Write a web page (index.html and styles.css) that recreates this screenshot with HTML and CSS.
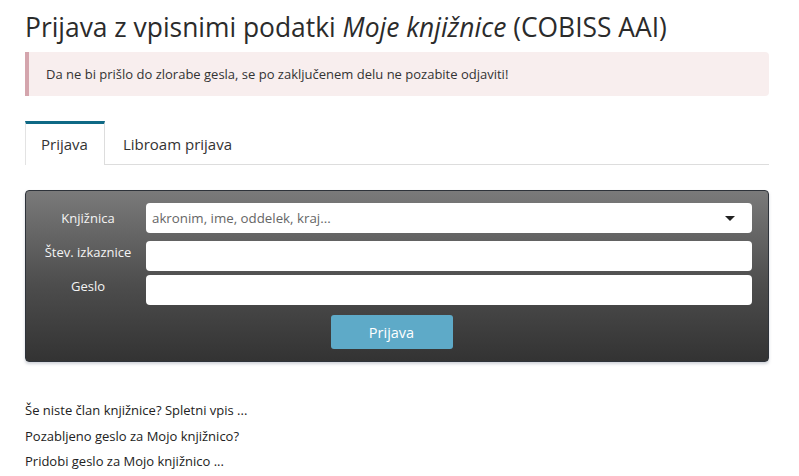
FILE: index.html
```html
<!DOCTYPE html>
<html lang="sl">
<head>
<meta charset="utf-8">
<title>Prijava</title>
<link rel="stylesheet" href="styles.css">
</head>
<body>
<div class="page">
  <h1 class="title">Prijava z vpisnimi podatki <em>Moje knjižnice</em> (COBISS AAI)</h1>
  <div class="alert">Da ne bi prišlo do zlorabe gesla, se po zaključenem delu ne pozabite odjaviti!</div>
  <ul class="tabs">
    <li class="tab active">Prijava</li>
    <li class="tab">Libroam prijava</li>
  </ul>
  <form class="panel">
    <div class="row row-first">
      <label class="label">Knjižnica</label>
      <div class="select">
        <span class="placeholder">akronim, ime, oddelek, kraj...</span>
        <span class="caret"></span>
      </div>
    </div>
    <div class="row row-second">
      <label class="label label-raised">Štev. izkaznice</label>
      <div class="input"></div>
    </div>
    <div class="row row-third">
      <label class="label label-raised">Geslo</label>
      <div class="input"></div>
    </div>
    <div class="actions">
      <button type="button" class="btn">Prijava</button>
    </div>
  </form>
  <ul class="links">
    <li>Še niste član knjižnice? Spletni vpis ...</li>
    <li>Pozabljeno geslo za Mojo knjižnico?</li>
    <li>Pridobi geslo za Mojo knjižnico ...</li>
  </ul>
</div>
</body>
</html>
```
FILE: styles.css
```css
* { box-sizing: border-box; }
body {
  margin: 0;
  background: #fff;
  font-family: "Open Sans", "Noto Sans", sans-serif;
  color: #333;
}
.page {
  width: 744px;
  margin-left: 25px;
  padding-top: 8px;
}
.title {
  margin: 0;
  font-size: 26.4px;
  font-weight: 400;
  line-height: 38px;
  color: #2b2b2b;
}
.title em { font-style: italic; }
.alert {
  margin-top: 6px;
  height: 44px;
  background: #f8eeee;
  border-left: 4px solid #d4a5ad;
  border-radius: 0 4px 4px 0;
  padding-left: 17px;
  font-size: 13px;
  line-height: 44px;
  color: #333;
}
.tabs {
  list-style: none;
  margin: 25px 0 0;
  padding: 0;
  display: flex;
  border-bottom: 1px solid #ddd;
  height: 44px;
}
.tab {
  font-size: 15px;
  line-height: 40px;
  padding: 0 18px 0 18px;
  color: #333;
  border-top: 3px solid transparent;
}
.tab.active {
  border-top-color: #0f6985;
  border-left: 1px solid #e3e3e3;
  border-right: 1px solid #ddd;
  background: #fff;
  height: 44px;
  padding: 0 16px 0 15px;
}
.panel {
  margin-top: 25px;
  height: 172px;
  border: 1px solid #2e333a;
  border-radius: 4px;
  background: linear-gradient(#7a7a7a, #4d4d4d 55%, #333 100%);
  box-shadow: 0 2px 3px rgba(120, 130, 145, 0.35);
  padding: 12px 16px 0 4px;
}
.row {
  display: flex;
  align-items: center;
  height: 30px;
}
.row-second { margin-top: 8px; }
.row-third { margin-top: 4px; }
.label {
  width: 116px;
  text-align: center;
  color: #f4f4f4;
  font-size: 13px;
}
.label-raised { margin-bottom: 8px; }
.select, .input {
  flex: 1;
  height: 30px;
  background: #fff;
  border-radius: 4px;
}
.select {
  display: flex;
  align-items: center;
  justify-content: space-between;
  padding: 0 17px 0 6px;
}
.placeholder {
  font-size: 13.3px;
  color: #666;
}
.caret {
  width: 0;
  height: 0;
  border-left: 5px solid transparent;
  border-right: 5px solid transparent;
  border-top: 5px solid #222;
}
.actions {
  display: flex;
  justify-content: center;
  margin-top: 10px;
}
.btn {
  width: 122px;
  height: 34px;
  margin-left: 1px;
  border: none;
  border-radius: 3px;
  background: #5eaac8;
  color: #fff;
  font-family: "Open Sans", "Noto Sans", sans-serif;
  font-size: 14.5px;
}
.links {
  list-style: none;
  margin: 36px 0 0;
  padding: 0;
  font-size: 13px;
  line-height: 25.5px;
  color: #222;
}
```
